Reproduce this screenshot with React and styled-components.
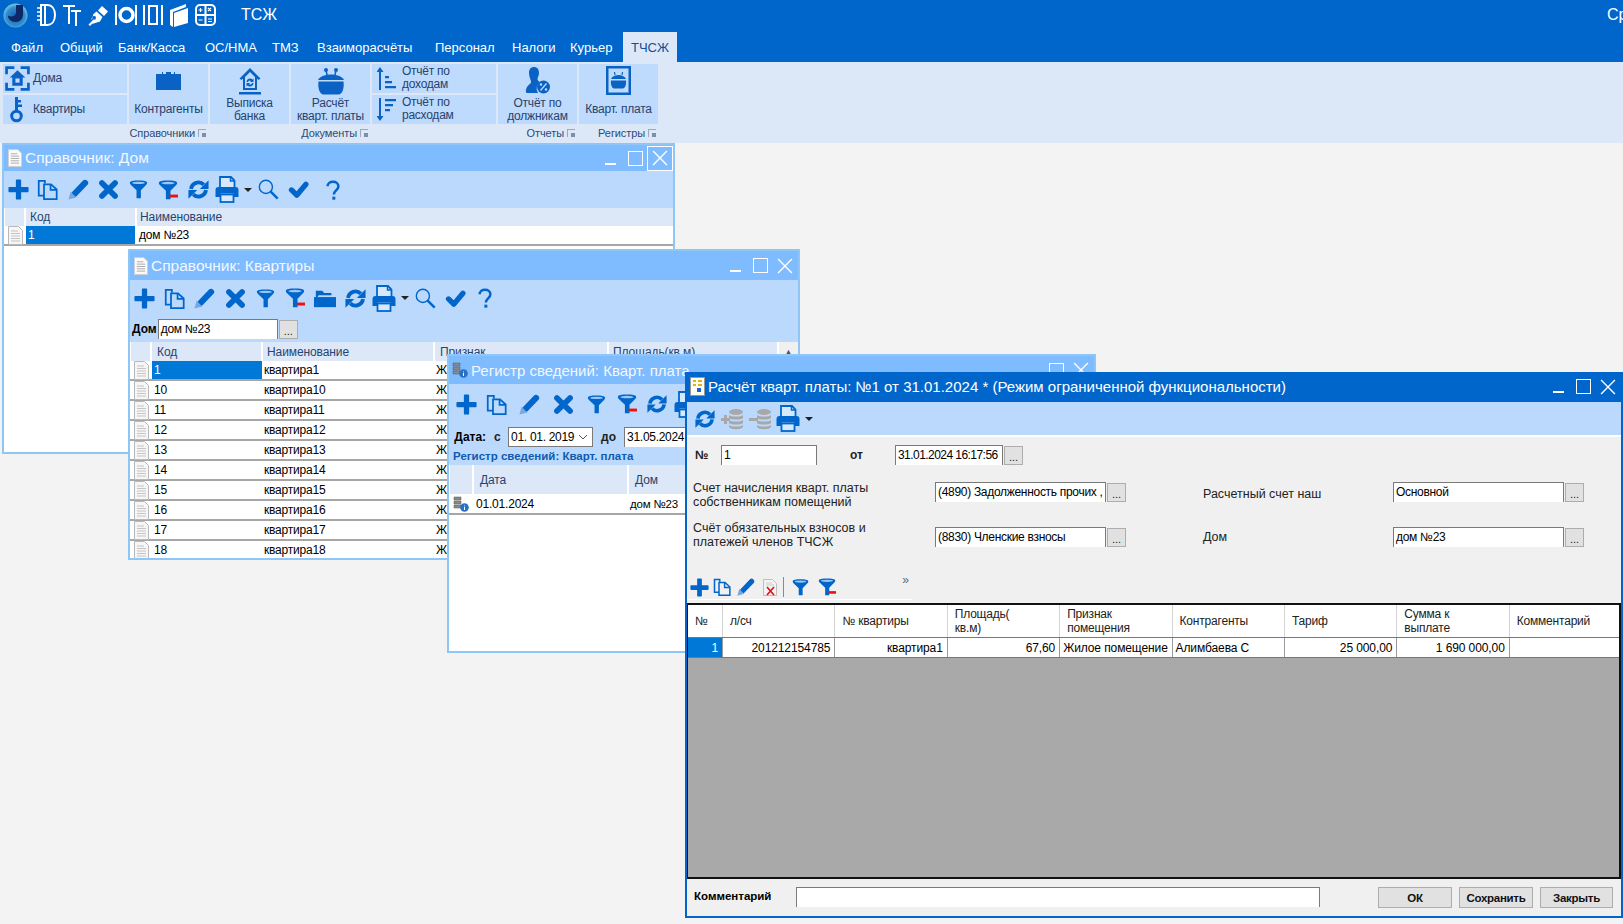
import styled, { createGlobalStyle } from "styled-components";

const BLUE = "#0066cc";

const GlobalStyle = createGlobalStyle`
    html, body {
        margin: 0;
        width: 100%;
        height: 100%;
        overflow: hidden;
        background: #f3f3f3;
    }
    body {
        font-family: "Liberation Sans", Arial, sans-serif;
        font-size: 12px;
        color: #000;
    }
    * { box-sizing: border-box; }
`;

/* ---------- icons ---------- */

const Svg = ({ size = 22, w, h, children, vb = "0 0 24 24", color = BLUE }) => (
    <svg width={w || size} height={h || size} viewBox={vb} fill={color} stroke="none" style={{ display: "block", flex: "none" }}>
        {children}
    </svg>
);

const PlusIcon = ({ size }) => (
    <Svg size={size}><path d="M9 1.500a1 1 0 0 1 1-1h4a1 1 0 0 1 1 1V9h7.500a1 1 0 0 1 1 1v4a1 1 0 0 1-1 1H15v7.500a1 1 0 0 1-1 1h-4a1 1 0 0 1-1-1V15H1.500a1 1 0 0 1-1-1v-4a1 1 0 0 1 1-1H9z" /></Svg>
);
const CopyIcon = ({ size }) => (
    <Svg size={size}>
        <g fill="none" stroke={BLUE} strokeWidth="2">
            <path d="M9 5V2H2v17h6" />
            <path d="M8 6h8l6.500 6v11H8z" />
            <path d="M15.500 6v6.500H22" />
        </g>
    </Svg>
);
const PencilIcon = ({ size }) => (
    <Svg size={size}>
        <path d="M7.500 17 19.500 4.500" stroke={BLUE} strokeWidth="7" strokeLinecap="round" />
        <path d="M3 14.500 9.500 21 .5 23.500z" fill="#7aa8dd" />
    </Svg>
);
const CrossIcon = ({ size }) => (
    <Svg size={size}>
        <path d="M4.500 4.500l15 15M19.500 4.500l-15 15" stroke={BLUE} strokeWidth="6.500" strokeLinecap="round" />
    </Svg>
);
const FunnelIcon = ({ size, minus }) => (
    <Svg size={size}>
        <path d="M1 3.500C1 1 6 .5 12 .5s11 .5 11 3c0 1-.5 1.800-1.500 2.800L15 13v10H9.500V13L2.500 6.300C1.500 5.300 1 4.500 1 3.500z" />
        <ellipse cx="12" cy="3.700" rx="8" ry="1.500" fill="#9cc6f5" />
        {minus && <rect x="14" y="17.500" width="10" height="3.500" fill="#ee1111" />}
    </Svg>
);
const PrinterIcon = () => (
    <Svg w={24} h={27} vb="0 0 24 27">
        <path d="M5 12V1h11l3.500 3.500V12" fill="#d6e8fe" stroke={BLUE} strokeWidth="1.800" />
        <path d="M15.500 1v4h4" fill="none" stroke={BLUE} strokeWidth="1.500" />
        <path d="M3.500 11h17a3 3 0 0 1 3 3v7h-5v-3.500h-13V21H.5v-7a3 3 0 0 1 3-3z" />
        <rect x="5.500" y="18.500" width="13" height="7.500" fill="#d6e8fe" stroke={BLUE} strokeWidth="1.800" />
    </Svg>
);
const SearchIcon = ({ size }) => (
    <Svg size={size}>
        <circle cx="9" cy="9" r="7.500" fill="none" stroke={BLUE} strokeWidth="1.600" />
        <path d="m14.500 14.500 8 8" stroke={BLUE} strokeWidth="2.800" />
    </Svg>
);
const CheckIcon = ({ size }) => (
    <Svg size={size}>
        <path d="M4 12.500 10 18.500 20.500 6" fill="none" stroke={BLUE} strokeWidth="6" strokeLinecap="round" strokeLinejoin="round" />
    </Svg>
);
const QuestionIcon = ({ size }) => (
    <Svg size={size}>
        <path d="M5.500 7.500C5.500 4 8.500 2 12 2s6.500 2 6.500 5.500c0 5-5.500 5-5.500 10" fill="none" stroke={BLUE} strokeWidth="3" />
        <rect x="11.200" y="20" width="3.600" height="3.600" />
    </Svg>
);
const FolderIcon = ({ size }) => (
    <Svg size={size}>
        <path d="M2 4h7l2 2.500h8V9H5L2 14z" />
        <path d="M0 22V11h24v11z" />
    </Svg>
);
const RefreshIcon = ({ size = 21 }) => (
    <Svg size={size}>
        <g fill="none" stroke={BLUE} strokeWidth="4.400">
            <path d="M3.500 11.500A8.500 8.500 0 0 1 18 6.500" />
            <path d="M20.500 12.500A8.500 8.500 0 0 1 6 17.500" />
        </g>
        <path d="M23.500 1.500v10h-10zM.5 22.500v-10h10z" />
    </Svg>
);

const DocIcon = () => (
    <Svg w={15} h={19} vb="0 0 15 19">
        <path d="M.5.500h10l4 4v14H.5z" fill="#f6f6f6" stroke="#b8b8b8" />
        <path d="M3 5h7M3 7.500h9M3 10h9M3 12.500h9M3 15h9" stroke="#c4c4c4" />
    </Svg>
);
const PageTitleIcon = () => (
    <Svg w={14} h={18} vb="0 0 15 19">
        <path d="M.5.500h10l4 4v14H.5z" fill="#fbfbfb" stroke="#d0d0d0" />
        <path d="M3 5h7M3 7.500h9M3 10h9M3 12.500h9M3 15h9" stroke="#a8a8a8" />
    </Svg>
);
const RegisterIcon = () => (
    <Svg size={16} vb="0 0 16 16">
        <path d="M1 1h7v3H1zM1 5h7v3H1zM1 9h7v3H1z" fill="#8a8a8a" stroke="#555" strokeWidth=".5" />
        <circle cx="11.500" cy="11.500" r="4.300" fill="#2a6fc6" />
        <path d="M11.500 9.500v.8M11.500 11v3" stroke="#fff" />
    </Svg>
);
const CalcDocIcon = () => (
    <Svg w={15} h={19} vb="0 0 15 19">
        <path d="M.5.500h14v18H.5z" fill="#fdfdf0" stroke="#999" />
        <path d="M3 3h3v2H3zM8 3h4v2H8zM3 7h3v2H3zM8 7h4v2H8z" fill="#e0b020" />
        <path d="M7 11h4v4H7z" fill="#1464d2" />
    </Svg>
);
const StackIcon = ({ plus }) => (
    <Svg w={23} h={22} vb="0 0 23 22" color="#a8a8a8">
        <ellipse cx="15" cy="4" rx="7" ry="3" />
        <path d="M8 7c2 2 12 2 14 0v3c-2 2-12 2-14 0zM8 12c2 2 12 2 14 0v3c-2 2-12 2-14 0zM8 17c2 2 12 2 14 0v2c-2 3-12 3-14 0z" />
        {plus
            ? <path d="M3 7v3H0v3h3v3h3v-3h3v-3H6V7z" />
            : <path d="M0 10h9v3H0z" />}
    </Svg>
);
const DocDeleteIcon = () => (
    <Svg w={15} h={17} vb="0 0 15 17">
        <path d="M.5.500h9l4 4v12H.5z" fill="#f3f3f3" stroke="#bdbdbd" />
        <path d="M3 4h6M3 6h8" stroke="#ccc" />
        <path d="m4 8 7 8M11 8l-7 8" stroke="#e01010" strokeWidth="1.600" />
    </Svg>
);

const WinMin = () => <Svg size={15} vb="0 0 15 15" color="#fff"><rect x="1" y="12" width="11" height="2" /></Svg>;
const WinMax = () => (
    <Svg size={15} vb="0 0 15 15"><rect x=".5" y=".5" width="14" height="14" fill="none" stroke="#fff" /></Svg>
);
const WinClose = () => (
    <Svg size={16} vb="0 0 15 15"><path d="m1 1 13 13M14 1 1 14" stroke="#fff" strokeWidth="1.300" /></Svg>
);

const LogoIcon = () => (
    <svg width="25" height="25" viewBox="0 0 25 25" style={{ display: "block" }}>
        <defs>
            <radialGradient id="logoBg" cx="50%" cy="55%" r="55%">
                <stop offset="0%" stopColor="#1b5fb0" />
                <stop offset="70%" stopColor="#2f8fd0" />
                <stop offset="100%" stopColor="#7cc8e4" />
            </radialGradient>
        </defs>
        <circle cx="12.500" cy="12.500" r="12" fill="url(#logoBg)" />
        <path d="M13 2h7v9c0 5-3 8-7.500 8S5 16 5 12.500c3 2 8 1 8-3z" fill="#0d2767" />
    </svg>
);

const WhiteStroke = ({ w, children }) => (
    <svg width={w} height="24" viewBox={`0 0 ${w} 24`} fill="none" stroke="#fff" strokeWidth="2" style={{ display: "block", flex: "none" }}>
        {children}
    </svg>
);

const RIB = "#0a63c4";

const HouseFrameIcon = () => (
    <Svg size={25}>
        <path d="M1.500 8V1.500H9M15 1.500h7.500V8M1.500 16v6.500H9M15 22.500h7.500V16" fill="none" stroke={RIB} strokeWidth="2.600" />
        <path d="M12 4 4.500 11H7v8h10v-8h2.500z" fill={RIB} />
        <path d="M10 12h4v4h-4z" fill="#bedafd" />
    </Svg>
);
const KeyIcon = () => (
    <Svg w={13} h={26} vb="0 0 13 26">
        <path d="M5 0h3v14H5z" fill={RIB} />
        <path d="M8 3h3v2.500H8zM8 7.500h4v2.500H8z" fill={RIB} />
        <circle cx="6.500" cy="19" r="4.800" fill="none" stroke={RIB} strokeWidth="3" />
    </Svg>
);
const CaseIcon = () => (
    <Svg w={25} h={19} vb="0 0 25 19" color={RIB}>
        <path d="M0 3h6V1h1v2h3V1h5v2h3V1h1v2h6v16H0z" />
    </Svg>
);
const BankIcon = () => (
    <Svg w={24} h={28} vb="0 0 24 28" color={RIB}>
        <path d="M12 1 1.500 11.500l2 1.500L5 11.500V23h14V11.500l1.500 1.500 2-1.500zM12 5l5 5v11H7V10z" />
        <path d="M1 25h22v2.500H1z" />
        <path d="M8.500 15a3.500 3.500 0 0 1 6-2.500l1-1V15h-3.500l1-1a2 2 0 0 0-3 1zM15.500 16a3.500 3.500 0 0 1-6 2.500l-1 1V16H12l-1 1a2 2 0 0 0 3-1z" />
    </Svg>
);
const PotIcon = ({ w = 28, h = 28 }) => (
    <Svg w={w} h={h} vb="0 0 28 28" color={RIB}>
        <path d="m10 8-1-5M18 8l1-5" stroke={RIB} strokeWidth="1.500" />
        <circle cx="9" cy="3" r="2" />
        <circle cx="19" cy="3" r="2" />
        <path d="M1 13C3 9 9 7.500 14 7.500S25 9 27 13z" />
        <path d="M1.500 14.500h25c1 7-1.500 13-5 13h-15c-3.500 0-6-6-5-13z" />
    </Svg>
);
const FramedPotIcon = () => (
    <svg width="25" height="29" viewBox="0 0 25 29" style={{ display: "block" }}>
        <rect x="1.250" y="1.250" width="22.500" height="26.500" fill="none" stroke={RIB} strokeWidth="2.500" />
        <path d="m9 9-.5-3M16 9l.5-3" stroke={RIB} strokeWidth="1.200" />
        <path d="M5 13c1.500-3 4.500-4 7.500-4s6 1 7.500 4zM5 14.500h15c.5 4-1 8-3 8H8c-2 0-3.500-4-3-8z" fill={RIB} />
    </svg>
);
const SortIcon = ({ down }) => (
    <Svg w={19} h={23} vb="0 0 19 23" color={RIB}>
        {down ? (
            <>
                <path d="M2 0h2v18h2.500L3 23l-3.500-5H2z" />
                <path d="M8 1h11v2.200H8zM8 6h8v2.200H8zM8 11h5v2.200H8z" />
            </>
        ) : (
            <>
                <path d="M2 23h2V5h2.500L3 0-.5 5H2z" />
                <path d="M8 9h4v2.200H8zM8 14h7v2.200H8zM8 19h11v2.200H8z" />
            </>
        )}
    </Svg>
);
const DebtorIcon = () => (
    <Svg w={26} h={27} vb="0 0 24 27" color={RIB}>
        <path d="M8 0c3 0 5 2 5 6 0 2-1 4-1.500 5.500 0 2 1 3 2.500 3.500a8 8 0 0 0-2 11H1c-1.500 0-1.500-3 0-6 1.500-2.500 4-3 4-5C5 13 3 10 3 6c0-4 2-6 5-6z" />
        <circle cx="17.500" cy="20" r="6.500" />
        <path d="m14.500 23.500 6-7" stroke="#bedafd" strokeWidth="1.300" />
        <circle cx="15" cy="17.500" r="1.200" fill="#bedafd" />
        <circle cx="20" cy="22.500" r="1.200" fill="#bedafd" />
    </Svg>
);

/* ---------- top of the page ---------- */

const Page = styled.div`
    display: flex;
    flex-direction: column;
    width: 1623px;
    height: 924px;
    overflow: hidden;
`;

const TitleRow = styled.div`
    display: flex;
    align-items: center;
    height: 32px;
    padding: 0 0 2px 3px;
    background: ${BLUE};
    color: #fff;
`;

const QuickIcons = styled.div`
    display: flex;
    align-items: center;
    gap: 6px;
    margin-left: 8px;
`;

const AppName = styled.div`
    margin-left: 25px;
    font-size: 16px;
`;

const RightTitle = styled.div`
    margin-left: auto;
    padding-right: 1px;
    width: 16px;
    overflow: hidden;
    font-size: 16px;
`;

const TabRow = styled.div`
    display: flex;
    align-items: stretch;
    height: 30px;
    padding-left: 11px;
    background: ${BLUE};
`;

const Tab = styled.div`
    display: flex;
    align-items: center;
    width: ${(p) => p.$w}px;
    padding-left: ${(p) => (p.$active ? 8 : 0)}px;
    font-size: 13px;
    color: ${(p) => (p.$active ? "#0f4f9e" : "#fff")};
    background: ${(p) => (p.$active ? "#dce8f8" : "transparent")};
`;

const Ribbon = styled.div`
    display: flex;
    gap: 2px;
    height: 81px;
    padding: 2px 0 0 3px;
    background: #dce8f8;
    color: #27436f;
`;

const RibbonGroup = styled.div`
    display: flex;
    flex-direction: column;
`;

const GroupCells = styled.div`
    display: flex;
    gap: 2px;
    height: 60px;
`;

const StackCol = styled.div`
    display: flex;
    flex-direction: column;
    gap: 2px;
    width: 124px;
`;

const SmallCell = styled.div`
    display: flex;
    flex: 1;
    align-items: center;
    padding-left: ${(p) => p.$pad}px;
    gap: ${(p) => p.$gap}px;
    background: #bedafd;
    font-size: 12px;
    line-height: 13px;
    letter-spacing: -0.25px;
`;

const SmallText = styled.span`
    padding-bottom: 1px;
`;

const BigCell = styled.div`
    display: flex;
    flex-direction: column;
    align-items: center;
    width: 79px;
    background: #bedafd;
`;

const BigIconBox = styled.div`
    display: flex;
    align-items: center;
    justify-content: center;
    height: 31px;
    padding-top: 2px;
`;

const BigLabel = styled.div`
    display: flex;
    flex: 1;
    align-items: center;
    text-align: center;
    font-size: 12px;
    line-height: 13px;
    letter-spacing: -0.2px;
`;

const GroupCaption = styled.div`
    display: flex;
    align-items: center;
    justify-content: flex-end;
    gap: 3px;
    height: 17px;
    padding-right: 2px;
    font-size: 11px;
    letter-spacing: -0.1px;
    color: #2d4a78;
`;

const Launcher = styled.span`
    position: relative;
    width: 8px;
    height: 8px;
    border: 1px solid #9aa9bd;
    border-right: 0;
    border-bottom: 0;
    &::after {
        content: "";
        position: absolute;
        right: 0;
        bottom: 0;
        width: 4px;
        height: 4px;
        background: #7d8ea6;
    }
`;

/* ---------- windows ---------- */

const Desktop = styled.div`
    position: relative;
    flex: 1;
    background: #f3f3f3;
`;

const Win = styled.div`
    position: absolute;
    left: ${(p) => p.$x}px;
    top: ${(p) => p.$y}px;
    width: ${(p) => p.$w}px;
    height: ${(p) => p.$h}px;
    display: flex;
    flex-direction: column;
    overflow: hidden;
    border: 2px solid ${(p) => (p.$active ? BLUE : "#8ec6f8")};
    background: ${(p) => (p.$active ? "#f0f0f0" : "#fff")};
`;

const WinTitle = styled.div`
    display: flex;
    flex: none;
    align-items: center;
    gap: 3px;
    height: ${(p) => p.$h}px;
    padding-left: ${(p) => p.$pad}px;
    padding-bottom: ${(p) => (p.$active ? 3 : 0)}px;
    background: ${(p) => (p.$active ? BLUE : "#7fbbff")};
    color: ${(p) => (p.$active ? "#fff" : "#f2f8ff")};
    font-size: ${(p) => p.$fs}px;
    white-space: nowrap;
`;

const WinButtons = styled.div`
    display: flex;
    align-items: center;
    margin-left: auto;
    height: 100%;
`;

const WinButton = styled.div`
    display: flex;
    align-items: center;
    justify-content: center;
    width: ${(p) => p.$w}px;
    height: 25px;
    border: 1px solid ${(p) => (p.$hover ? "#fff" : "transparent")};
`;

const Toolbar = styled.div`
    display: flex;
    flex: none;
    align-items: center;
    height: ${(p) => p.$h}px;
    padding-left: ${(p) => p.$pad || 0}px;
    background: #bbd9fd;
`;

const Tool = styled.div`
    display: flex;
    align-items: center;
    justify-content: center;
    flex: none;
    width: ${(p) => p.$w || 30}px;
`;

const PrintCaret = styled.span`
    margin-left: 5px;
    width: 0;
    height: 0;
    border-left: 4px solid transparent;
    border-right: 4px solid transparent;
    border-top: 4px solid #222;
`;

const FilterBar = styled.div`
    display: flex;
    flex: none;
    align-items: center;
    height: ${(p) => p.$h}px;
    padding-left: 2px;
    background: #bbd9fd;
`;

const BoldLabel = styled.span`
    font-weight: bold;
    font-size: 12px;
`;

const Field = styled.div`
    flex: none;
    width: ${(p) => p.$w}px;
    height: 20px;
    margin-left: ${(p) => p.$ml || 0}px;
    padding-left: 2px;
    line-height: 18px;
    font-size: 12px;
    letter-spacing: ${(p) => (p.$tight ? -0.55 : -0.3)}px;
    white-space: nowrap;
    overflow: hidden;
    background: #fff;
    border: 1px solid #7a7a7a;
    border-bottom: 0;
`;

const DotsButton = styled.div`
    flex: none;
    display: flex;
    align-items: flex-end;
    justify-content: center;
    width: 19px;
    height: 19px;
    margin-left: 1px;
    padding-bottom: 2px;
    background: #e1e1e1;
    border: 1px solid #adadad;
    font-size: 11px;
    line-height: 10px;
    color: #222;
`;

const DateSelect = styled.div`
    display: flex;
    align-items: center;
    justify-content: space-between;
    width: 85px;
    height: 20px;
    padding: 0 4px 0 2px;
    background: #fff;
    border: 1px solid #7a7a7a;
    font-size: 12px;
    letter-spacing: -0.3px;
`;

/* ---------- list grids ---------- */

const GridHead = styled.div`
    display: flex;
    flex: none;
    height: ${(p) => p.$h}px;
    gap: 2px;
    background: #fff;
    padding-left: 1px;
`;

const HeadCell = styled.div`
    display: flex;
    align-items: center;
    flex: ${(p) => (p.$w ? "none" : 1)};
    width: ${(p) => p.$w}px;
    padding-left: ${(p) => p.$pad ?? 5}px;
    background: #dce8f8;
    color: #27436f;
    font-size: 12px;
    letter-spacing: -0.1px;
    white-space: nowrap;
    overflow: hidden;
`;

const GridRow = styled.div`
    display: flex;
    flex: none;
    align-items: stretch;
    height: ${(p) => p.$h}px;
    padding-left: 1px;
    border-bottom: 2px solid #a6a6a6;
    background: #fff;
    font-size: 12px;
`;

const RowIcon = styled.div`
    display: flex;
    align-items: center;
    justify-content: center;
    flex: none;
    width: 21px;
`;

const RowCell = styled.div`
    display: flex;
    align-items: center;
    flex: ${(p) => (p.$w ? "none" : 1)};
    width: ${(p) => p.$w}px;
    padding-left: ${(p) => p.$pad ?? 2}px;
    font-size: ${(p) => p.$fs || 12}px;
    letter-spacing: -0.2px;
    white-space: nowrap;
    overflow: hidden;
    color: ${(p) => (p.$selected ? "#fff" : "#000")};
    background: ${(p) => (p.$selected ? "#0078d7" : "transparent")};
`;

const ScrollTop = styled.div`
    display: flex;
    align-items: center;
    justify-content: center;
    flex: none;
    width: 19px;
    background: #f0f0f0;
    color: #555;
    font-size: 9px;
`;

const RegisterCaption = styled.div`
    flex: none;
    height: 15px;
    padding-left: 4px;
    background: #bbd9fd;
    color: #0f5bb0;
    font-size: 11.5px;
    font-weight: bold;
    line-height: 13px;
`;

/* ---------- document form ---------- */

const FormBody = styled.div`
    display: flex;
    flex: 1;
    flex-direction: column;
    min-height: 0;
    border-top: 2px solid #fff;
    background: #f0f0f0;
`;

const FormRow = styled.div`
    display: flex;
    flex: none;
    align-items: center;
    height: 20px;
    margin-top: ${(p) => p.$mt}px;
    padding-left: 6px;
`;

const FormLabel = styled.div`
    flex: none;
    width: ${(p) => p.$w}px;
    margin: ${(p) => p.$dy || 0}px 0 ${(p) => p.$db || 0}px ${(p) => p.$ml || 0}px;
    padding-left: ${(p) => p.$pad || 0}px;
    font-size: ${(p) => (p.$bold ? 12 : 12.5)}px;
    line-height: 14px;
    font-weight: ${(p) => (p.$bold ? "bold" : "normal")};
    color: #222;
`;

const MiniToolbar = styled.div`
    display: flex;
    flex: none;
    align-items: center;
    position: relative;
    width: 225px;
    height: 23px;
    margin-top: 30px;
    padding: 0 0 2px 1px;
    border-bottom: 1px solid #fff;
`;

const MiniTool = styled.div`
    display: flex;
    justify-content: center;
    flex: none;
    width: ${(p) => p.$w}px;
`;

const MiniSep = styled.div`
    width: 1px;
    height: 20px;
    margin: 0 6px 0 1px;
    background: #8a8a8a;
`;

const Overflow = styled.span`
    position: absolute;
    right: 3px;
    top: -4px;
    color: #5a6a80;
    font-size: 12px;
`;

const DocGrid = styled.div`
    display: flex;
    flex: none;
    flex-direction: column;
    height: 276px;
    margin: 3px 0 0 -1px;
    border: 2px solid #111;
    background: #a9a9a9;
`;

const DocHead = styled.div`
    display: grid;
    grid-template-columns: 35px repeat(8, 112.4px);
    height: 33px;
    background: #fff;
    border-bottom: 1px solid #777;
`;

const DocHeadCell = styled.div`
    display: flex;
    align-items: center;
    padding: 0 0 0 7px;
    border-right: 1px solid #d4d4d4;
    font-size: 12px;
    line-height: 14px;
    letter-spacing: -0.2px;
    color: #222;
`;

const DocRow = styled.div`
    display: grid;
    grid-template-columns: 35px repeat(8, 112.4px);
    height: 20px;
    background: #fff;
    border-bottom: 1px solid #777;
`;

const DocCell = styled.div`
    display: flex;
    align-items: center;
    justify-content: ${(p) => (p.$left ? "flex-start" : "flex-end")};
    padding: 0 4px 0 3px;
    border-right: 1px solid #9a9a9a;
    font-size: 12px;
    letter-spacing: -0.1px;
    white-space: nowrap;
    overflow: hidden;
    color: ${(p) => (p.$selected ? "#fff" : "#000")};
    background: ${(p) => (p.$selected ? "#0078d7" : "transparent")};
`;

const FormFooter = styled.div`
    display: flex;
    flex: none;
    align-items: flex-start;
    margin-top: 8px;
    padding-left: 7px;
`;

const FooterLabel = styled.div`
    width: 102px;
    padding-top: 3px;
    font-size: 11.5px;
    font-weight: bold;
`;

const FooterField = styled.div`
    width: 524px;
    height: 20px;
    background: #fff;
    border: 1px solid #7a7a7a;
    border-bottom: 0;
`;

const FooterButton = styled.button`
    width: ${(p) => p.$w}px;
    height: 21px;
    margin-left: ${(p) => p.$ml}px;
    padding: 0;
    background: #e1e1e1;
    border: 1px solid #adadad;
    font-family: inherit;
    font-size: 11.5px;
    font-weight: bold;
    letter-spacing: -0.3px;
    color: #111;
`;

/* ---------- data ---------- */

const tabs = [
    ["Файл", 49], ["Общий", 58], ["Банк/Касса", 87], ["ОС/НМА", 67], ["ТМЗ", 45],
    ["Взаиморасчёты", 118], ["Персонал", 77], ["Налоги", 58], ["Курьер", 53],
];

const flats = ["1", "10", "11", "12", "13", "14", "15", "16", "17", "18"];

const docHeads = ["№", "л/сч", "№ квартиры", "Площадь(\nкв.м)", "Признак\nпомещения", "Контрагенты", "Тариф", "Сумма к\nвыплате", "Комментарий"];

const Print = () => (
    <Tool $w={40}>
        <PrinterIcon />
        <PrintCaret />
    </Tool>
);

const Controls = ({ hoverClose }) => (
    <WinButtons>
        <WinButton $w={24}><WinMin /></WinButton>
        <WinButton $w={24}><WinMax /></WinButton>
        <WinButton $w={26} $hover={hoverClose}><WinClose /></WinButton>
    </WinButtons>
);

export default function App() {
    return (
        <Page>
            <GlobalStyle />
            <TitleRow>
                <LogoIcon />
                <QuickIcons>
                    <WhiteStroke w={20}>
                        <path d="M5 2h6c5 0 8 4 8 10s-3 10-8 10H5zM9 2v20" />
                        <path d="M1 5h5M1 9h5M1 13h5M1 17h5" strokeWidth="1.500" />
                    </WhiteStroke>
                    <WhiteStroke w={19}>
                        <path d="M1 3h12M7 3v18M9 8h10M14 8v15" />
                    </WhiteStroke>
                    <svg width="22" height="24" viewBox="0 0 22 24" fill="#fff" style={{ display: "block", flex: "none" }}>
                        <path d="M15 3 21 8.500 17 13 11 7.500z" />
                        <path d="M9.500 8.500 15.500 14 13 18.500 5 21l-2 2-1.500-1.500 5-5a1.800 1.800 0 1 0-1-1L4 17l2.500-6z" />
                    </svg>
                    <WhiteStroke w={22}>
                        <path d="M1 2v20M21 2v20" />
                        <circle cx="11.500" cy="12" r="6.500" strokeWidth="3.500" />
                    </WhiteStroke>
                    <WhiteStroke w={20}>
                        <path d="M1 2v20M19 2v20" />
                        <rect x="6" y="3" width="8" height="18" />
                    </WhiteStroke>
                    <svg width="20" height="24" viewBox="0 0 20 24" fill="#fff" style={{ display: "block", flex: "none" }}>
                        <path d="M1 7 17 1v3l-13 5v15l-3-2zM5 10l14-5v15L5 24z" />
                    </svg>
                    <WhiteStroke w={21}>
                        <rect x="1" y="2" width="19" height="20" rx="4" />
                        <path d="M10.500 2v20M1 12h19" />
                        <path d="M3.500 7h4M5.500 5v4M13 5l3 3M16 5l-3 3M3.500 17h4M13 16h4M13 18.500h4" strokeWidth="1.200" />
                    </WhiteStroke>
                </QuickIcons>
                <AppName>ТСЖ</AppName>
                <RightTitle>Ср</RightTitle>
            </TitleRow>

            <TabRow>
                {tabs.map(([name, w]) => <Tab key={name} $w={w}>{name}</Tab>)}
                <Tab $w={54} $active>ТЧСЖ</Tab>
            </TabRow>

            <Ribbon>
                <RibbonGroup>
                    <GroupCells>
                        <StackCol>
                            <SmallCell $pad={2} $gap={3}><HouseFrameIcon />Дома</SmallCell>
                            <SmallCell $pad={7} $gap={10}><KeyIcon />Квартиры</SmallCell>
                        </StackCol>
                        <BigCell>
                            <BigIconBox><CaseIcon /></BigIconBox>
                            <BigLabel>Контрагенты</BigLabel>
                        </BigCell>
                    </GroupCells>
                    <GroupCaption>Справочники<Launcher /></GroupCaption>
                </RibbonGroup>
                <RibbonGroup>
                    <GroupCells>
                        <BigCell>
                            <BigIconBox><BankIcon /></BigIconBox>
                            <BigLabel>Выписка<br />банка</BigLabel>
                        </BigCell>
                        <BigCell>
                            <BigIconBox><PotIcon /></BigIconBox>
                            <BigLabel>Расчёт<br />кварт. платы</BigLabel>
                        </BigCell>
                    </GroupCells>
                    <GroupCaption>Документы<Launcher /></GroupCaption>
                </RibbonGroup>
                <RibbonGroup>
                    <GroupCells>
                        <StackCol>
                            <SmallCell $pad={5} $gap={6}><SortIcon /><SmallText>Отчёт по<br />доходам</SmallText></SmallCell>
                            <SmallCell $pad={5} $gap={6}><SortIcon down /><SmallText>Отчёт по<br />расходам</SmallText></SmallCell>
                        </StackCol>
                        <BigCell>
                            <BigIconBox><DebtorIcon /></BigIconBox>
                            <BigLabel>Отчёт по<br />должникам</BigLabel>
                        </BigCell>
                    </GroupCells>
                    <GroupCaption>Отчеты<Launcher /></GroupCaption>
                </RibbonGroup>
                <RibbonGroup>
                    <GroupCells>
                        <BigCell>
                            <BigIconBox><FramedPotIcon /></BigIconBox>
                            <BigLabel>Кварт. плата</BigLabel>
                        </BigCell>
                    </GroupCells>
                    <GroupCaption>Регистры<Launcher /></GroupCaption>
                </RibbonGroup>
            </Ribbon>

            <Desktop>
                <Win $x={2} $y={0} $w={673} $h={311}>
                    <WinTitle $h={26} $pad={4} $fs={15.5}>
                        <PageTitleIcon />Справочник: Дом
                        <Controls hoverClose />
                    </WinTitle>
                    <Toolbar $h={37}>
                        <Tool $w={28}><PlusIcon size={21} /></Tool>
                        <Tool $w={31}><CopyIcon size={21} /></Tool>
                        <Tool><PencilIcon size={21} /></Tool>
                        <Tool><CrossIcon size={21} /></Tool>
                        <Tool><FunnelIcon size={19} /></Tool>
                        <Tool><FunnelIcon size={20} minus /></Tool>
                        <Tool><RefreshIcon /></Tool>
                        <Print />
                        <Tool><SearchIcon size={21} /></Tool>
                        <Tool><CheckIcon size={21} /></Tool>
                        <Tool $w={40}><QuestionIcon size={20} /></Tool>
                    </Toolbar>
                    <GridHead $h={18}>
                        <HeadCell $w={19} $pad={0} />
                        <HeadCell $w={109} $pad={4}>Код</HeadCell>
                        <HeadCell $pad={3}>Наименование</HeadCell>
                    </GridHead>
                    <GridRow $h={20}>
                        <RowIcon><DocIcon /></RowIcon>
                        <RowCell $w={109} $selected>1</RowCell>
                        <RowCell $pad={4}>дом №23</RowCell>
                    </GridRow>
                </Win>

                <Win $x={128} $y={106} $w={672} $h={311}>
                    <WinTitle $h={29} $pad={4} $fs={15.5}>
                        <PageTitleIcon />Справочник: Квартиры
                        <Controls />
                    </WinTitle>
                    <Toolbar $h={36}>
                        <Tool $w={29}><PlusIcon size={21} /></Tool>
                        <Tool><CopyIcon size={21} /></Tool>
                        <Tool $w={31}><PencilIcon size={21} /></Tool>
                        <Tool><CrossIcon size={21} /></Tool>
                        <Tool><FunnelIcon size={19} /></Tool>
                        <Tool><FunnelIcon size={20} minus /></Tool>
                        <Tool><FolderIcon size={22} /></Tool>
                        <Tool><RefreshIcon /></Tool>
                        <Print />
                        <Tool><SearchIcon size={21} /></Tool>
                        <Tool><CheckIcon size={21} /></Tool>
                        <Tool><QuestionIcon size={20} /></Tool>
                    </Toolbar>
                    <FilterBar $h={26}>
                        <BoldLabel>Дом</BoldLabel>
                        <Field $w={120} $ml={1}>дом №23</Field>
                        <DotsButton>...</DotsButton>
                    </FilterBar>
                    <GridHead $h={19}>
                        <HeadCell $w={19} $pad={0} />
                        <HeadCell $w={109} $pad={5}>Код</HeadCell>
                        <HeadCell $w={170} $pad={4}>Наименование</HeadCell>
                        <HeadCell $w={172} $pad={5}>Признак</HeadCell>
                        <HeadCell $pad={4}>Площадь(кв.м)</HeadCell>
                        <ScrollTop>▲</ScrollTop>
                    </GridHead>
                    {flats.map((n, i) => (
                        <GridRow key={n} $h={20}>
                            <RowIcon><DocIcon /></RowIcon>
                            <RowCell $w={110} $pad={2} $selected={i === 0}>{n}</RowCell>
                            <RowCell $w={172} $pad={2}>квартира{n}</RowCell>
                            <RowCell $pad={2}>Жилое помещение</RowCell>
                        </GridRow>
                    ))}
                </Win>

                <Win $x={447} $y={211} $w={649} $h={299}>
                    <WinTitle $h={28} $pad={3} $fs={15}>
                        <RegisterIcon />Регистр сведений: Кварт. плата
                        <Controls />
                    </WinTitle>
                    <Toolbar $h={40} $pad={2}>
                        <Tool><PlusIcon size={21} /></Tool>
                        <Tool><CopyIcon size={21} /></Tool>
                        <Tool $w={36}><PencilIcon size={21} /></Tool>
                        <Tool $w={33}><CrossIcon size={21} /></Tool>
                        <Tool $w={32}><FunnelIcon size={19} /></Tool>
                        <Tool><FunnelIcon size={20} minus /></Tool>
                        <Tool><RefreshIcon size={20} /></Tool>
                        <Print />
                    </Toolbar>
                    <FilterBar $h={26}>
                        <BoldLabel>&nbsp;Дата:</BoldLabel>
                        <FormLabel $w={14} $ml={8} $bold>с</FormLabel>
                        <DateSelect>
                            <span>01. 01. 2019</span>
                            <svg width="10" height="6" viewBox="0 0 10 6" fill="none" stroke="#555"><path d="m1 1 4 4 4-4" /></svg>
                        </DateSelect>
                        <FormLabel $w={23} $ml={8} $bold>до</FormLabel>
                        <Field $w={90}>31.05.2024</Field>
                    </FilterBar>
                    <RegisterCaption>Регистр сведений: Кварт. плата</RegisterCaption>
                    <GridHead $h={29}>
                        <HeadCell $w={22} $pad={0} />
                        <HeadCell $w={153} $pad={6}>Дата</HeadCell>
                        <HeadCell $pad={6}>Дом</HeadCell>
                    </GridHead>
                    <GridRow $h={21}>
                        <RowIcon><RegisterIcon /></RowIcon>
                        <RowCell $w={157} $pad={5}>01.01.2024</RowCell>
                        <RowCell $pad={2} $fs={11.5}>дом №23</RowCell>
                    </GridRow>
                </Win>

                <Win $active $x={685} $y={229} $w={938} $h={546}>
                    <WinTitle $active $h={28} $pad={3} $fs={15}>
                        <CalcDocIcon />Расчёт кварт. платы: №1 от 31.01.2024 * (Режим ограниченной функциональности)
                        <Controls />
                    </WinTitle>
                    <Toolbar $h={33} $pad={5}>
                        <Tool $w={26}><RefreshIcon size={20} /></Tool>
                        <Tool $w={28}><StackIcon plus /></Tool>
                        <Tool $w={28}><StackIcon /></Tool>
                        <Print />
                    </Toolbar>
                    <FormBody>
                        <FormRow $mt={8}>
                            <FormLabel $w={28} $pad={2} $bold>№</FormLabel>
                            <Field $w={96}>1</Field>
                            <FormLabel $w={45} $ml={33} $bold>от</FormLabel>
                            <Field $w={108} $tight>31.01.2024 16:17:56</Field>
                            <DotsButton>...</DotsButton>
                        </FormRow>
                        <FormRow $mt={17}>
                            <FormLabel $w={242} $dy={6}>Счет начисления кварт. платы<br />собственникам помещений</FormLabel>
                            <Field $w={171}>(4890) Задолженность прочих , дебиторов</Field>
                            <DotsButton>...</DotsButton>
                            <FormLabel $w={190} $ml={77} $dy={4}>Расчетный счет наш</FormLabel>
                            <Field $w={171}>Основной</Field>
                            <DotsButton>...</DotsButton>
                        </FormRow>
                        <FormRow $mt={25}>
                            <FormLabel $w={242} $db={4}>Счёт обязательных взносов и<br />платежей членов ТЧСЖ</FormLabel>
                            <Field $w={171}>(8830) Членские взносы</Field>
                            <DotsButton>...</DotsButton>
                            <FormLabel $w={190} $ml={77}>Дом</FormLabel>
                            <Field $w={171}>дом №23</Field>
                            <DotsButton>...</DotsButton>
                        </FormRow>
                        <MiniToolbar>
                            <MiniTool $w={22}><PlusIcon size={19} /></MiniTool>
                            <MiniTool $w={24}><CopyIcon size={18} /></MiniTool>
                            <MiniTool $w={24}><PencilIcon size={18} /></MiniTool>
                            <MiniTool $w={24}><DocDeleteIcon /></MiniTool>
                            <MiniSep />
                            <MiniTool $w={20}><FunnelIcon size={17} /></MiniTool>
                            <MiniTool $w={34}><FunnelIcon size={18} minus /></MiniTool>
                            <Overflow>»</Overflow>
                        </MiniToolbar>
                        <DocGrid>
                            <DocHead>
                                {docHeads.map((h) => (
                                    <DocHeadCell key={h}>
                                        <span>{h.split("\n").map((part, i) => (i ? <span key={part}><br />{part}</span> : part))}</span>
                                    </DocHeadCell>
                                ))}
                            </DocHead>
                            <DocRow>
                                <DocCell $selected>1</DocCell>
                                <DocCell>201212154785</DocCell>
                                <DocCell>квартира1</DocCell>
                                <DocCell>67,60</DocCell>
                                <DocCell $left>Жилое помещение</DocCell>
                                <DocCell $left>Алимбаева С</DocCell>
                                <DocCell>25 000,00</DocCell>
                                <DocCell>1 690 000,00</DocCell>
                                <DocCell />
                            </DocRow>
                        </DocGrid>
                        <FormFooter>
                            <FooterLabel>Комментарий</FooterLabel>
                            <FooterField />
                            <FooterButton $w={74} $ml={58}>ОК</FooterButton>
                            <FooterButton $w={74} $ml={7}>Сохранить</FooterButton>
                            <FooterButton $w={73} $ml={7}>Закрыть</FooterButton>
                        </FormFooter>
                    </FormBody>
                </Win>
            </Desktop>
        </Page>
    );
}
